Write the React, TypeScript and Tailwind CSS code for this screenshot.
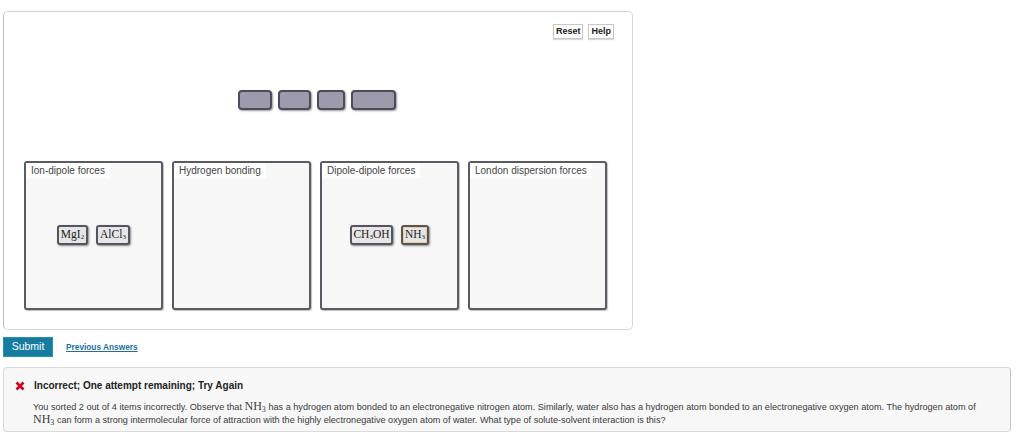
import React from "react";

const sans = { fontFamily: '"Liberation Sans", Arial, sans-serif' };
const serif = { fontFamily: '"Liberation Serif", "Times New Roman", serif' };

function Chip({ children, w, active }: { children: React.ReactNode; w: number; active?: boolean }) {
  return (
    <div
      className={
        "h-[20px] rounded-[3px] border-2 border-[#55555f] bg-[#e6e6e6] flex items-center justify-center text-[11.5px] text-[#222] shadow-[1px_1px_2px_rgba(0,0,0,0.45)] " +
        (active ? "outline outline-1 outline-[#f3c98a] -outline-offset-3" : "")
      }
      style={{ ...serif, width: w }}
    >
      {children}
    </div>
  );
}

function Bin({ label, children }: { label: string; children?: React.ReactNode }) {
  return (
    <div className="w-[139px] h-[149px] rounded-[3px] border-2 border-[#5a5a62] bg-[#f7f7f7] shadow-[1px_1px_1px_rgba(0,0,0,0.25)] flex flex-col">
      <div className="self-start bg-white px-[5px] h-[15px] flex items-center text-[10px] text-[#444]" style={sans}>
        {label}
      </div>
      <div className="mt-[47px] flex justify-center gap-[8px]">{children}</div>
    </div>
  );
}

function Block({ w }: { w: number }) {
  return (
    <div
      className="h-[20px] rounded-[4px] border-2 border-[#4d4c58] bg-[#9c9aab] shadow-[1px_1px_2px_rgba(0,0,0,0.4)]"
      style={{ width: w }}
    />
  );
}

export default function App() {
  return (
    <div className="w-[1024px] h-[444px] bg-white overflow-hidden" style={sans}>
      <div className="ml-[3px] mt-[11px] w-[630px] h-[319px] rounded-[5px] border border-[#d6d6d6] border-l-[#bcbcbc] flex flex-col">
        <div className="flex justify-end gap-[5px] pr-[18px] pt-[12px]">
          <button className="h-[15px] px-[2px] border border-[#c8c8c8] bg-white text-[9px] font-bold text-[#222] leading-none shadow-[0_1px_1px_rgba(0,0,0,0.15)]">
            Reset
          </button>
          <button className="h-[15px] px-[2px] border border-[#c8c8c8] bg-white text-[9px] font-bold text-[#222] leading-none shadow-[0_1px_1px_rgba(0,0,0,0.15)]">
            Help
          </button>
        </div>
        <div className="mt-[51px] flex justify-center gap-[6px] pr-[3px]">
          <Block w={34} />
          <Block w={33} />
          <Block w={28} />
          <Block w={45} />
        </div>
        <div className="mt-[51px] ml-[20px] flex gap-[9px]">
          <Bin label="Ion-dipole forces">
            <Chip w={31}>
              MgI<sub className="text-[7px] align-baseline relative top-[2px]">2</sub>
            </Chip>
            <Chip w={34}>
              AlCl<sub className="text-[7px] align-baseline relative top-[2px]">3</sub>
            </Chip>
          </Bin>
          <Bin label="Hydrogen bonding" />
          <Bin label="Dipole-dipole forces">
            <Chip w={43}>
              CH<sub className="text-[7px] align-baseline relative top-[2px]">3</sub>OH
            </Chip>
            <Chip w={28} active>
              NH<sub className="text-[7px] align-baseline relative top-[2px]">3</sub>
            </Chip>
          </Bin>
          <Bin label="London dispersion forces" />
        </div>
      </div>

      <div className="mt-[7px] ml-[3px] flex items-center gap-[13px]">
        <button className="w-[50px] h-[20px] bg-[#167c9f] text-white text-[10.5px] border border-[#2a8fb3]">Submit</button>
        <a className="text-[8.3px] font-bold text-[#1f6f9e] underline">Previous Answers</a>
      </div>

      <div className="mt-[10px] ml-[3px] w-[1008px] h-[65px] rounded-[4px] border border-[#dadada] border-r-[#c4c4c4] bg-[#f7f7f7] pl-[11px] pt-[10px]">
        <div className="flex items-center gap-[10px]">
          <svg width="10" height="10" viewBox="0 0 10 10">
            <path d="M1.5 1.5 L8.5 8.5 M8.5 1.5 L1.5 8.5" stroke="#d0021b" strokeWidth="2.6" strokeLinecap="butt" />
          </svg>
          <div className="text-[10px] font-bold text-[#222] -ml-[1px]">Incorrect; One attempt remaining; Try Again</div>
        </div>
        <div className="mt-[7px] ml-[18px] text-[9.15px] leading-[12px] text-[#3a3a3a] whitespace-nowrap">
          You sorted 2 out of 4 items incorrectly. Observe that{" "}
          <span className="text-[12px]" style={serif}>
            NH<sub className="text-[8px] align-baseline relative top-[2px]">3</sub>
          </span>{" "}
          has a hydrogen atom bonded to an electronegative nitrogen atom. Similarly, water also has a hydrogen atom bonded to an electronegative oxygen atom. The hydrogen atom of
          <br />
          <span className="text-[12px]" style={serif}>
            NH<sub className="text-[8px] align-baseline relative top-[2px]">3</sub>
          </span>{" "}
          can form a strong intermolecular force of attraction with the highly electronegative oxygen atom of water. What type of solute-solvent interaction is this?
        </div>
      </div>
    </div>
  );
}
